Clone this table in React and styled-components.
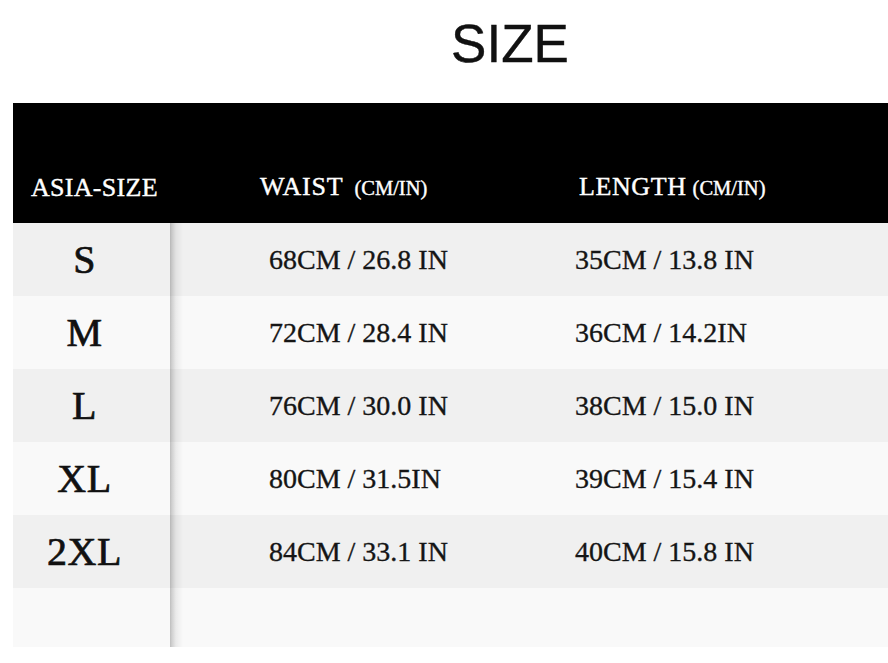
import React from "react";
import styled, { createGlobalStyle } from "styled-components";

const Global = createGlobalStyle`
  html, body { margin: 0; padding: 0; background: #ffffff; }
  body { width: 888px; height: 663px; overflow: hidden; }
`;

const Page = styled.div`
  width: 888px;
  height: 663px;
  background: #ffffff;
  display: flex;
  flex-direction: column;
`;

const Title = styled.h1`
  margin: 0;
  padding: 17px 0 0 132px;
  height: 53px;
  line-height: 53px;
  text-align: center;
  font-family: "Liberation Sans", Arial, sans-serif;
  font-weight: 400;
  font-size: 53px;
  color: #111111;
  -webkit-text-stroke: 0.4px #111111;
`;

const Table = styled.div`
  margin: 33px 0 0 13px;
  display: flex;
  flex-direction: column;
  font-family: "Liberation Serif", "Times New Roman", serif;
`;

const Header = styled.div`
  display: grid;
  grid-template-columns: 157px 305px 1fr;
  height: 120px;
  background: #000000;
  color: #ffffff;
  align-items: end;
  padding-bottom: 22px;
  box-sizing: border-box;
`;

const HeadCell = styled.div`
  padding-left: ${(p) => p.$pad}px;
  font-size: 26px;
  line-height: 26px;
  white-space: nowrap;
  letter-spacing: ${(p) => p.$ls}px;
  -webkit-text-stroke: 0.4px #ffffff;
`;

const Unit = styled.span`
  font-size: 20.5px;
  letter-spacing: 0;
  margin-left: ${(p) => p.$gap}px;
`;

const Row = styled.div`
  display: grid;
  grid-template-columns: 157px 305px 1fr;
  height: ${(p) => p.$h}px;
  background: ${(p) => (p.$alt ? "#f9f9f9" : "#f0f0f0")};
  align-items: stretch;
`;

const SizeCell = styled.div`
  display: flex;
  align-items: center;
  justify-content: center;
  padding-right: 14px;
  font-size: 40px;
  line-height: 1;
  color: #111111;
  letter-spacing: 0.5px;
  -webkit-text-stroke: 0.7px #111111;
`;

const DataCell = styled.div`
  display: flex;
  align-items: center;
  padding-left: ${(p) => p.$pad}px;
  font-size: 28px;
  line-height: 1;
  color: #151515;
  white-space: nowrap;
  -webkit-text-stroke: 0.35px #151515;
  background-image: ${(p) =>
    p.$shadow
      ? "linear-gradient(to right, rgba(0,0,0,0.24) 0px, rgba(0,0,0,0.16) 2px, rgba(0,0,0,0.06) 6px, rgba(0,0,0,0) 13px)"
      : "none"};
`;

const rows = [
  ["S", "68CM / 26.8 IN", "35CM / 13.8 IN"],
  ["M", "72CM / 28.4 IN", "36CM / 14.2IN"],
  ["L", "76CM / 30.0 IN", "38CM / 15.0 IN"],
  ["XL", "80CM / 31.5IN", "39CM / 15.4 IN"],
  ["2XL", "84CM / 33.1 IN", "40CM / 15.8 IN"],
  ["", "", ""],
];

export default function App() {
  return (
    <Page>
      <Global />
      <Title>SIZE</Title>
      <Table>
        <Header>
          <HeadCell $pad={18} $ls={0.3}>ASIA-SIZE</HeadCell>
          <HeadCell $pad={90} $ls={0.8}>
            WAIST<Unit $gap={11}>(CM/IN)</Unit>
          </HeadCell>
          <HeadCell $pad={104} $ls={0.6}>
            LENGTH<Unit $gap={6}>(CM/IN)</Unit>
          </HeadCell>
        </Header>
        {rows.map((r, i) => (
          <Row key={i} $alt={i % 2 === 1} $h={i === rows.length - 1 ? 59 : 73}>
            <SizeCell>{r[0]}</SizeCell>
            <DataCell $pad={99} $shadow>{r[1]}</DataCell>
            <DataCell $pad={100}>{r[2]}</DataCell>
          </Row>
        ))}
      </Table>
    </Page>
  );
}
